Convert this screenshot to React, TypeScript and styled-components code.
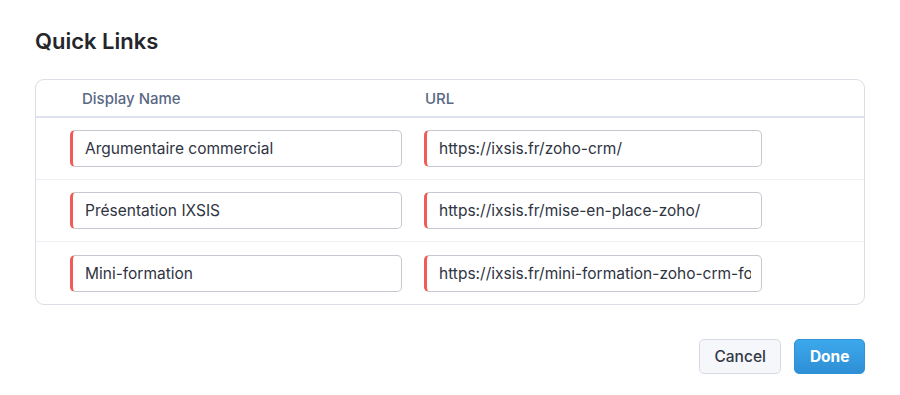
import styled, { createGlobalStyle } from 'styled-components'

const links = [
  { name: 'Argumentaire commercial', url: 'https://ixsis.fr/zoho-crm/' },
  { name: 'Présentation IXSIS', url: 'https://ixsis.fr/mise-en-place-zoho/' },
  {
    name: 'Mini-formation',
    url: 'https://ixsis.fr/mini-formation-zoho-crm-formation/',
  },
]

export default function App() {
  return (
    <>
      <GlobalStyle />
      <Dialog>
        <Title>Quick Links</Title>
        <Table>
          <HeaderRow>
            <HeaderCell indent={12}>Display Name</HeaderCell>
            <HeaderCell indent={1}>URL</HeaderCell>
          </HeaderRow>
          {links.map((link, i) => (
            <Row key={link.name} last={i === links.length - 1}>
              <Field defaultValue={link.name} />
              <Field defaultValue={link.url} />
            </Row>
          ))}
        </Table>
        <Footer>
          <Button>Cancel</Button>
          <Button primary>Done</Button>
        </Footer>
      </Dialog>
    </>
  )
}

const GlobalStyle = createGlobalStyle`
  body {
    margin: 0;
    background: #fff;
    font-family: Inter, 'Noto Sans', sans-serif;
  }
`
const Dialog = styled.div`
  width: 900px;
  height: 395px;
  box-sizing: border-box;
  padding: 28px 35px 0 35px;
`
const Title = styled.h2`
  margin: 0;
  font-size: 22px;
  line-height: 26px;
  font-weight: 600;
  color: #24262b;
`
const Table = styled.div`
  margin-top: 25px;
  border: 1px solid #dcdde6;
  border-radius: 9px;
  overflow: hidden;
`
const Columns = styled.div`
  display: grid;
  grid-template-columns: 332px 338px;
  column-gap: 22px;
  padding-left: 34px;
  align-items: center;
`
const HeaderRow = styled(Columns)`
  height: 36px;
  border-bottom: 2px solid #dee1ee;
`
const HeaderCell = styled.div<{ indent: number }>`
  padding-left: ${(p) => p.indent}px;
  font-size: 15px;
  font-weight: 500;
  color: #5a6884;
`
const Row = styled(Columns)<{ last?: boolean }>`
  height: 62px;
  box-sizing: border-box;
  border-bottom: ${(p) => (p.last ? 'none' : '1px solid #f0f0f4')};
`
const Field = styled.input`
  box-sizing: border-box;
  width: 100%;
  height: 37px;
  border: 1px solid #c6c7cf;
  border-left: 3px solid #f25a55;
  border-radius: 5px;
  padding: 0 10px 0 12px;
  font-family: Inter, 'Noto Sans', sans-serif;
  font-size: 15.5px;
  color: #2f3442;
  background: #fff;
  outline: none;
`
const Footer = styled.div`
  display: flex;
  justify-content: flex-end;
  gap: 13px;
  margin-top: 34px;
`
const Button = styled.button<{ primary?: boolean }>`
  height: 35px;
  padding: 0 14.5px;
  border-radius: 5px;
  font-family: Inter, 'Noto Sans', sans-serif;
  font-size: 15.5px;
  font-weight: ${(p) => (p.primary ? 700 : 500)};
  cursor: pointer;
  border: 1px solid ${(p) => (p.primary ? '#2f92d8' : '#d8dbe4')};
  color: ${(p) => (p.primary ? '#fff' : '#333845')};
  background: ${(p) =>
    p.primary ? 'linear-gradient(#3da8ec, #2e8fd5)' : '#f6f7fa'};
`
